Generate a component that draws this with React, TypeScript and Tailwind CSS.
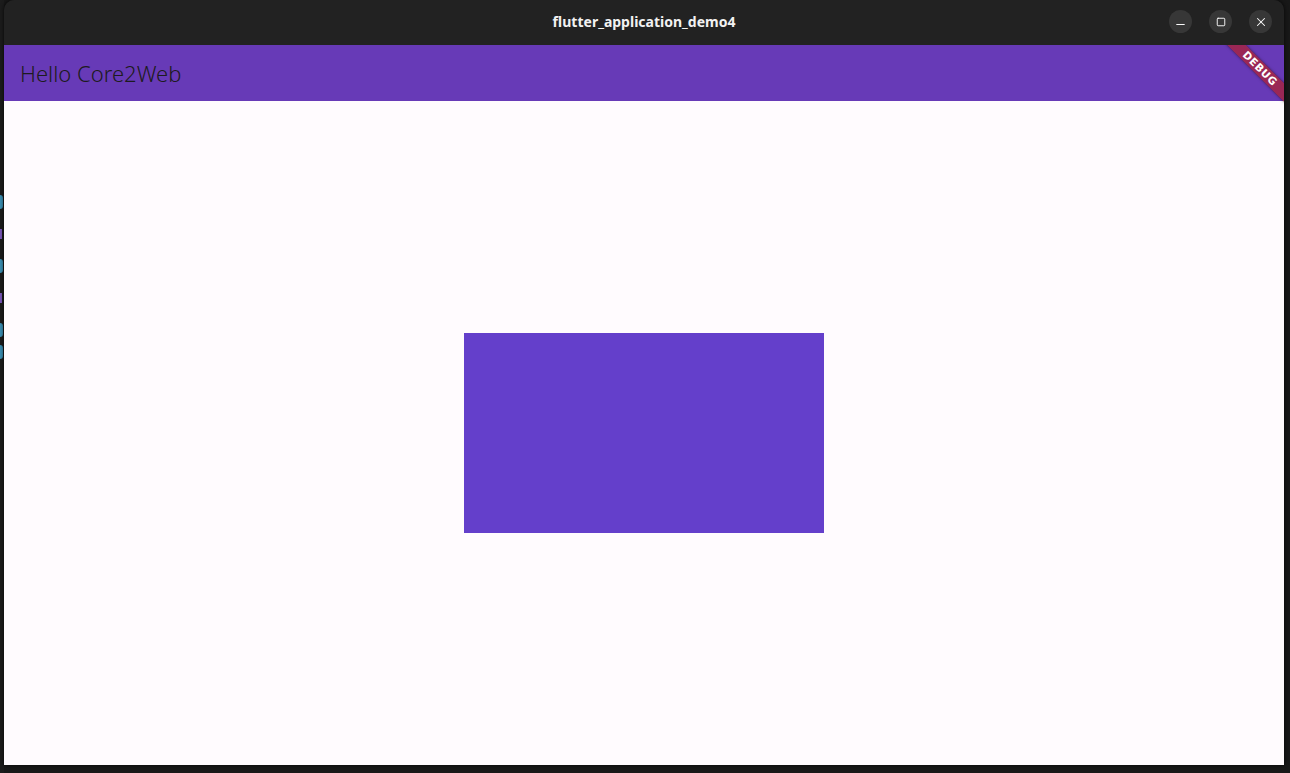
import { Minus, Square, X } from "lucide-react";

function DebugBanner() {
	return (
		<div className="pointer-events-none absolute top-0 right-0 h-[80px] w-[80px] overflow-hidden">
			<div className="absolute left-[14px] top-[17px] flex h-[13px] w-[84px] rotate-45 items-center justify-center bg-[rgba(183,28,28,0.63)] shadow-[0_0_3px_rgba(0,0,0,0.5)]">
				<span className="font-['DejaVu_Sans',sans-serif] text-[10.5px] font-bold leading-none tracking-[0.6px] text-white">
					DEBUG
				</span>
			</div>
		</div>
	);
}

export default function App() {
	return (
		<div className="relative h-[773px] w-[1290px] overflow-hidden bg-[#181818]">
			{/* desktop peeking at the left edge */}
			<div className="absolute left-0 top-0 flex h-[773px] w-[4px] flex-col bg-[#1c1c1c]">
				<div className="mt-[195px] h-[14px] w-[3px] rounded-r-full bg-[#3b8fb3]" />
				<div className="mt-[20px] h-[10px] w-[2px] bg-[#7a56b8]" />
				<div className="mt-[20px] h-[14px] w-[3px] rounded-r-full bg-[#3b8fb3]" />
				<div className="mt-[20px] h-[10px] w-[2px] bg-[#7a56b8]" />
				<div className="mt-[20px] h-[14px] w-[3px] rounded-r-full bg-[#3b8fb3]" />
				<div className="mt-[8px] h-[14px] w-[3px] rounded-r-full bg-[#3b8fb3]" />
			</div>

			{/* window */}
			<div className="absolute left-[4px] top-0 flex h-[765px] w-[1280px] flex-col overflow-hidden rounded-t-[10px] shadow-[0_0_4px_rgba(0,0,0,0.8)]">
				{/* title bar */}
				<div className="relative flex h-[45px] shrink-0 items-center justify-center bg-[#222222] pb-[3px]">
					<span className="font-['Noto_Sans',sans-serif] text-[14px] font-bold text-[#f2f2f2]">
						flutter_application_demo4
					</span>
					<div className="absolute right-[12px] top-[10px] flex gap-[17px]">
						<div className="flex h-[23px] w-[23px] items-center justify-center rounded-full bg-[#373737] text-white">
							<Minus size={13} strokeWidth={1.8} className="mt-[5px]" />
						</div>
						<div className="flex h-[23px] w-[23px] items-center justify-center rounded-full bg-[#373737] text-white">
							<Square size={10} strokeWidth={2.2} />
						</div>
						<div className="flex h-[23px] w-[23px] items-center justify-center rounded-full bg-[#373737] text-white">
							<X size={14} strokeWidth={1.8} />
						</div>
					</div>
				</div>

				{/* app */}
				<div className="relative flex flex-1 flex-col bg-[#fffbfe]">
					<div className="flex h-[56px] shrink-0 items-center bg-[#673ab7] px-[16px]">
						<span className="font-['Noto_Sans',sans-serif] text-[22px] font-light text-[#1d1b20]">
							Hello Core2Web
						</span>
					</div>
					<div className="flex flex-1 items-center justify-center">
						<div className="h-[200px] w-[360px] bg-[#643fcb]" />
					</div>
					<DebugBanner />
				</div>
			</div>
		</div>
	);
}
